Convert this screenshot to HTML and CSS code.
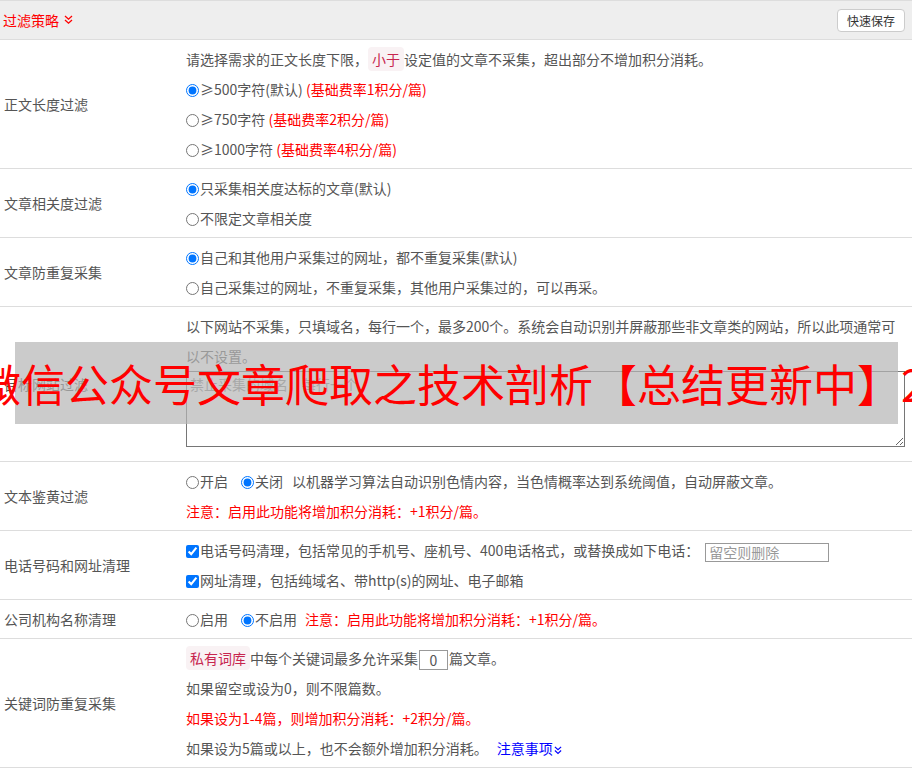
FILE: index.html
```html
<!DOCTYPE html>
<html lang="zh-CN">
<head>
<meta charset="utf-8">
<title>过滤策略</title>
<link rel="stylesheet" href="styles.css">
</head>
<body>
<div class="page">
  <div class="head">
    <span class="head-title">过滤策略<svg class="chev" width="9" height="10" viewBox="0 0 9 10"><polyline points="1,1 4.5,4.2 8,1" /><polyline points="1,5 4.5,8.2 8,5" /></svg></span>
    <button class="btn" type="button">快速保存</button>
  </div>

  <div class="row">
    <div class="label">正文长度过滤</div>
    <div class="content">
      <div class="line">请选择需求的正文长度下限，<code class="tag">小于</code>设定值的文章不采集，超出部分不增加积分消耗。</div>
      <div class="line"><label><input type="radio" name="len" checked>≥500字符(默认)</label> <span class="red">(基础费率1积分/篇)</span></div>
      <div class="line"><label><input type="radio" name="len">≥750字符</label> <span class="red">(基础费率2积分/篇)</span></div>
      <div class="line"><label><input type="radio" name="len">≥1000字符</label> <span class="red">(基础费率4积分/篇)</span></div>
    </div>
  </div>

  <div class="row">
    <div class="label">文章相关度过滤</div>
    <div class="content">
      <div class="line"><label><input type="radio" name="rel" checked>只采集相关度达标的文章(默认)</label></div>
      <div class="line"><label><input type="radio" name="rel">不限定文章相关度</label></div>
    </div>
  </div>

  <div class="row">
    <div class="label">文章防重复采集</div>
    <div class="content">
      <div class="line"><label><input type="radio" name="dup" checked>自己和其他用户采集过的网址，都不重复采集(默认)</label></div>
      <div class="line"><label><input type="radio" name="dup">自己采集过的网址，不重复采集，其他用户采集过的，可以再采。</label></div>
    </div>
  </div>

  <div class="row">
    <div class="label">目标网站过滤</div>
    <div class="content">
      <div class="line">以下网站不采集，只填域名，每行一个，最多200个。系统会自动识别并屏蔽那些非文章类的网站，所以此项通常可以不设置。</div>
      <textarea class="ta" placeholder="禁止采集的域名，每行一个"></textarea>
    </div>
    <div class="banner"><span class="banner-text">微信公众号文章爬取之技术剖析【总结更新中】2019</span></div>
  </div>

  <div class="row">
    <div class="label">文本鉴黄过滤</div>
    <div class="content">
      <div class="line"><label class="opt"><input type="radio" name="porn">开启</label><label class="opt opt-last"><input type="radio" name="porn" checked>关闭</label>以机器学习算法自动识别色情内容，当色情概率达到系统阈值，自动屏蔽文章。</div>
      <div class="line red">注意：启用此功能将增加积分消耗：+1积分/篇。</div>
    </div>
  </div>

  <div class="row">
    <div class="label">电话号码和网址清理</div>
    <div class="content">
      <div class="line"><label><input class="cb" type="checkbox" checked>电话号码清理，包括常见的手机号、座机号、400电话格式，或替换成如下电话：</label><input class="phone" type="text" placeholder="留空则删除"></div>
      <div class="line"><label><input class="cb" type="checkbox" checked>网址清理，包括纯域名、带http(s)的网址、电子邮箱</label></div>
    </div>
  </div>

  <div class="row">
    <div class="label">公司机构名称清理</div>
    <div class="content">
      <div class="line"><label class="opt"><input type="radio" name="org">启用</label><label class="opt opt-tight"><input type="radio" name="org" checked>不启用</label><span class="red">注意：启用此功能将增加积分消耗：+1积分/篇。</span></div>
    </div>
  </div>

  <div class="row">
    <div class="label">关键词防重复采集</div>
    <div class="content">
      <div class="line"><code class="tag">私有词库</code>中每个关键词最多允许采集<input class="num" type="text" value="0">篇文章。</div>
      <div class="line">如果留空或设为0，则不限篇数。</div>
      <div class="line red">如果设为1-4篇，则增加积分消耗：+2积分/篇。</div>
      <div class="line">如果设为5篇或以上，也不会额外增加积分消耗。<a class="link" href="#">注意事项<svg class="chev chev-blue" width="8" height="9" viewBox="0 0 9 10"><polyline points="1,1 4.5,4.2 8,1" /><polyline points="1,5 4.5,8.2 8,5" /></svg></a></div>
    </div>
  </div>
</div>
</body>
</html>
```

FILE: styles.css
```css
html {
  overflow: hidden;
}

body {
  margin: 0;
  font-family: "Microsoft YaHei", "Noto Sans CJK SC", sans-serif;
  font-size: 14px;
  color: #555;
  background: #fff;
  overflow: hidden;
}

.head {
  display: flex;
  align-items: center;
  justify-content: space-between;
  height: 38px;
  background: #eee;
  border-top: 1px solid #ddd;
  border-bottom: 1px solid #ddd;
  padding: 0 7px 0 3px;
}

.head-title {
  display: flex;
  align-items: center;
  gap: 5px;
  color: #f00;
}

.chev {
  fill: none;
  stroke: #f00;
  stroke-width: 1.3;
}

.chev-blue {
  stroke: #00f;
  margin-left: 1px;
  vertical-align: -1px;
}

.btn {
  width: 68px;
  height: 23px;
  padding: 0;
  background: #fff;
  border: 1px solid #ccc;
  border-radius: 4px;
  font-family: inherit;
  font-size: 12px;
  color: #333;
}

.row {
  position: relative;
  display: grid;
  grid-template-columns: 186px 1fr;
  border-bottom: 1px solid #ddd;
}

.label {
  display: flex;
  align-items: center;
  padding-left: 4px;
}

.content {
  padding: 4px 7px 4px 0;
  line-height: 30px;
}

.red {
  color: #f00;
}

.tag {
  font-family: inherit;
  font-size: 14px;
  background: #f9f2f4;
  color: #c7254e;
  padding: 2px 4px;
  border-radius: 4px;
}

input[type="radio"],
input[type="checkbox"] {
  width: 13px;
  height: 13px;
  margin: 0 1px 0 0;
  vertical-align: -2px;
}

.cb {
  margin-left: 1px;
}

.opt {
  margin-right: 13px;
}

.opt-last {
  margin-right: 9px;
}

.opt-tight {
  margin-right: 8px;
}

.phone {
  box-sizing: border-box;
  width: 124px;
  height: 19px;
  margin-left: 6px;
  padding: 0 3px;
  border: 1px solid #999;
  font-family: inherit;
  font-size: 14px;
  line-height: normal;
  vertical-align: middle;
  color: #555;
}

.phone::placeholder {
  color: #999;
}

.num {
  box-sizing: border-box;
  width: 29px;
  height: 20px;
  padding: 0;
  margin: 0 1px;
  border: 1px solid #999;
  font-family: inherit;
  font-size: 14px;
  line-height: normal;
  text-align: center;
  color: #555;
  vertical-align: middle;
}

.ta {
  display: block;
  box-sizing: border-box;
  width: 100%;
  height: 76px;
  margin: 0 0 10px;
  padding: 2px 3px;
  border: 1px solid #767676;
  font-family: inherit;
  font-size: 14px;
  color: #555;
}

.ta::placeholder {
  color: #888;
}

.link {
  color: #00f;
  text-decoration: none;
  margin-left: 9px;
}

.banner {
  position: absolute;
  left: 15px;
  top: 35px;
  width: 883px;
  height: 82px;
  background: rgba(181, 181, 181, 0.7);
  display: flex;
  align-items: center;
  white-space: nowrap;
}

.banner-text {
  flex: none;
  margin-left: -38px;
  font-size: 44px;
  line-height: 1;
  color: #f00;
}
```
